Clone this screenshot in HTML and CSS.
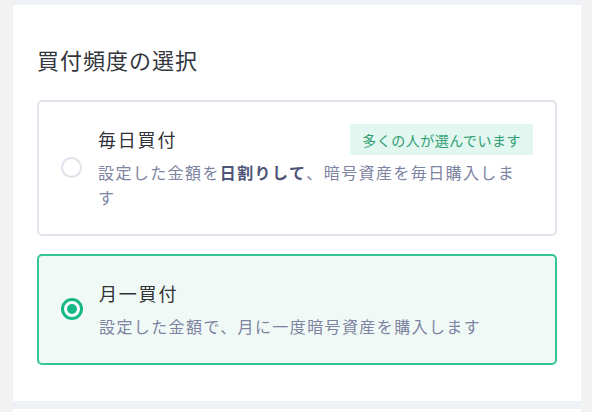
FILE: index.html
```html
<!DOCTYPE html>
<html lang="ja">
<head>
<meta charset="utf-8">
<title>買付頻度の選択</title>
<link rel="stylesheet" href="styles.css">
</head>
<body>
<div class="column">
  <section class="panel">
    <h2 class="panel-title">買付頻度の選択</h2>
    <div class="options">
      <label class="option">
        <span class="radio"></span>
        <span class="option-body">
          <span class="option-head">
            <span class="option-title">毎日買付</span>
            <span class="badge">多くの人が選んでいます</span>
          </span>
          <span class="option-desc">設定した金額を<b>日割りして</b>、暗号資産を毎日購入します</span>
        </span>
      </label>
      <label class="option option-selected">
        <span class="radio radio-checked"></span>
        <span class="option-body">
          <span class="option-head">
            <span class="option-title">月一買付</span>
          </span>
          <span class="option-desc">設定した金額で、月に一度暗号資産を購入します</span>
        </span>
      </label>
    </div>
  </section>
  <section class="panel panel-next"></section>
</div>
</body>
</html>
```
FILE: styles.css
```css
html, body {
  margin: 0;
  padding: 0;
}
body {
  background: #f2f2f2;
  font-family: "Noto Sans CJK JP", "Noto Sans", sans-serif;
  height: 412px;
  overflow: hidden;
}
.column {
  margin: 0 11px 0 13px;
  background: #eef1f5;
  padding-top: 5px;
  display: flex;
  flex-direction: column;
  gap: 8px;
  height: 407px;
}
.panel {
  background: #ffffff;
  padding: 38px 24px 36px;
}
.panel-next {
  flex: 1;
  padding: 0;
}
.panel-title {
  margin: 0;
  font-size: 22px;
  line-height: 32px;
  font-weight: 400;
  letter-spacing: 1px;
  color: #33363d;
}
.options {
  margin-top: 25px;
  display: flex;
  flex-direction: column;
  gap: 18px;
}
.option {
  display: flex;
  align-items: center;
  gap: 16px;
  border: 2px solid #e2e4ec;
  border-radius: 5px;
  padding: 22px 22px 24px;
  background: #ffffff;
}
.option-selected {
  border-color: #33c593;
  background: #f0f9f6;
}
.radio {
  flex: none;
  width: 21px;
  height: 21px;
  box-sizing: border-box;
  border-radius: 50%;
  border: 2.5px solid #e1e3ec;
  background: #ffffff;
}
.radio-checked {
  width: 22px;
  height: 22px;
  border: 3px solid #14b985;
  display: flex;
  align-items: center;
  justify-content: center;
}
.radio-checked::after {
  content: "";
  width: 10px;
  height: 10px;
  border-radius: 50%;
  background: #14b985;
}
.option-body {
  flex: 1;
  display: flex;
  flex-direction: column;
}
.option-head {
  display: flex;
  align-items: center;
  justify-content: space-between;
  min-height: 31px;
}
.option-title {
  font-size: 18px;
  line-height: 31px;
  letter-spacing: 1.8px;
  color: #2f3136;
}
.badge {
  height: 31px;
  display: flex;
  align-items: center;
  padding: 0 12px;
  background: #e2f7ef;
  color: #2f9e74;
  font-size: 14px;
  letter-spacing: 0.5px;
}
.option-desc {
  display: block;
  margin-top: 5px;
  padding-right: 4px;
  font-size: 16px;
  line-height: 25px;
  letter-spacing: 1.4px;
  color: #7d83a1;
}
.option-desc b {
  font-weight: 700;
  color: #4f5577;
}
```
